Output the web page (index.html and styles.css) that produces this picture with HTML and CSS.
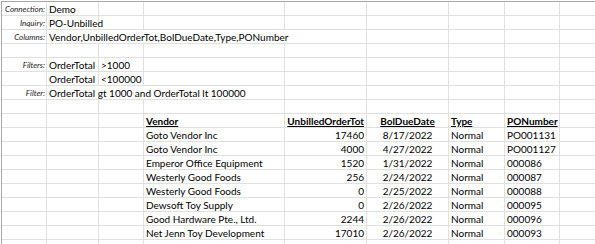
FILE: index.html
```html
<!DOCTYPE html>
<html>
<head>
<meta charset="utf-8">
<link rel="stylesheet" href="styles.css">
</head>
<body>
<div class="sheet">
  <!-- row 1 -->
  <div class="c lbl">Connection:</div><div class="c">Demo</div><div class="c"></div><div class="c"></div><div class="c"></div><div class="c"></div><div class="c"></div><div class="c"></div><div class="c"></div>
  <!-- row 2 -->
  <div class="c lbl">Inquiry:</div><div class="c">PO-Unbilled</div><div class="c"></div><div class="c"></div><div class="c"></div><div class="c"></div><div class="c"></div><div class="c"></div><div class="c"></div>
  <!-- row 3 -->
  <div class="c lbl">Columns:</div><div class="c span4">Vendor,UnbilledOrderTot,BolDueDate,Type,PONumber</div><div class="c"></div><div class="c"></div><div class="c"></div><div class="c"></div>
  <!-- row 4 -->
  <div class="c"></div><div class="c"></div><div class="c"></div><div class="c"></div><div class="c"></div><div class="c"></div><div class="c"></div><div class="c"></div><div class="c"></div>
  <!-- row 5 -->
  <div class="c lbl">Filters:</div><div class="c">OrderTotal</div><div class="c">&gt;1000</div><div class="c"></div><div class="c"></div><div class="c"></div><div class="c"></div><div class="c"></div><div class="c"></div>
  <!-- row 6 -->
  <div class="c lbl"></div><div class="c">OrderTotal</div><div class="c">&lt;100000</div><div class="c"></div><div class="c"></div><div class="c"></div><div class="c"></div><div class="c"></div><div class="c"></div>
  <!-- row 7 -->
  <div class="c lbl">Filter:</div><div class="c span3">OrderTotal gt 1000 and OrderTotal lt 100000</div><div class="c"></div><div class="c"></div><div class="c"></div><div class="c"></div><div class="c"></div>
  <!-- row 8 -->
  <div class="c"></div><div class="c"></div><div class="c"></div><div class="c"></div><div class="c"></div><div class="c"></div><div class="c"></div><div class="c"></div><div class="c"></div>
  <!-- row 9 header -->
  <div class="c"></div><div class="c"></div><div class="c"></div><div class="c hd">Vendor</div><div class="c hd r">UnbilledOrderTot</div><div class="c hd m">BolDueDate</div><div class="c hd">Type</div><div class="c hd">PONumber</div><div class="c"></div>
  <!-- data -->
  <div class="c"></div><div class="c"></div><div class="c"></div><div class="c">Goto Vendor Inc</div><div class="c r">17460</div><div class="c m">8/17/2022</div><div class="c">Normal</div><div class="c">PO001131</div><div class="c"></div>
  <div class="c"></div><div class="c"></div><div class="c"></div><div class="c">Goto Vendor Inc</div><div class="c r">4000</div><div class="c m">4/27/2022</div><div class="c">Normal</div><div class="c">PO001127</div><div class="c"></div>
  <div class="c"></div><div class="c"></div><div class="c"></div><div class="c">Emperor Office Equipment</div><div class="c r">1520</div><div class="c m">1/31/2022</div><div class="c">Normal</div><div class="c">000086</div><div class="c"></div>
  <div class="c"></div><div class="c"></div><div class="c"></div><div class="c">Westerly Good Foods</div><div class="c r">256</div><div class="c m">2/24/2022</div><div class="c">Normal</div><div class="c">000087</div><div class="c"></div>
  <div class="c"></div><div class="c"></div><div class="c"></div><div class="c">Westerly Good Foods</div><div class="c r">0</div><div class="c m">2/25/2022</div><div class="c">Normal</div><div class="c">000088</div><div class="c"></div>
  <div class="c"></div><div class="c"></div><div class="c"></div><div class="c">Dewsoft Toy Supply</div><div class="c r">0</div><div class="c m">2/26/2022</div><div class="c">Normal</div><div class="c">000095</div><div class="c"></div>
  <div class="c"></div><div class="c"></div><div class="c"></div><div class="c">Good Hardware Pte., Ltd.</div><div class="c r">2244</div><div class="c m">2/26/2022</div><div class="c">Normal</div><div class="c">000096</div><div class="c"></div>
  <div class="c"></div><div class="c"></div><div class="c"></div><div class="c">Net Jenn Toy Development</div><div class="c r">17010</div><div class="c m">2/26/2022</div><div class="c">Normal</div><div class="c">000093</div><div class="c"></div>
  <!-- row 18 -->
  <div class="c"></div><div class="c"></div><div class="c"></div><div class="c"></div><div class="c"></div><div class="c"></div><div class="c"></div><div class="c"></div><div class="c"></div>
</div>
</body>
</html>
```

FILE: styles.css
```css
html, body {
  margin: 0;
  padding: 0;
  background: #ffffff;
  overflow: hidden;
}

.sheet {
  margin: 1px 0 0 1px;
  border-top: 1px solid #a8a8a8;
  border-left: 1px solid #a8a8a8;
  display: grid;
  grid-template-columns: 45px 52px 45px 141px 82px 82px 56px 55px 60px;
  grid-auto-rows: 14px;
  width: 618px;
  font-family: Lato, "Open Sans", sans-serif;
  font-size: 10px;
  color: #000000;
}

.c {
  box-sizing: border-box;
  border-right: 1px solid #e0e0e0;
  border-bottom: 1px solid #e0e0e0;
  padding: 0 2px 0 2px;
  line-height: 14px;
  white-space: nowrap;
  overflow: visible;
}

.lbl {
  font-size: 8px;
  font-style: italic;
  text-align: right;
  padding-right: 1px;
  color: #1a1a1a;
  line-height: 14px;
}

.span4 { grid-column: span 4; }
.span3 { grid-column: span 3; }

.hd {
  font-weight: bold;
  text-decoration: underline;
}

.r { text-align: right; }
.m { text-align: center; }
```
